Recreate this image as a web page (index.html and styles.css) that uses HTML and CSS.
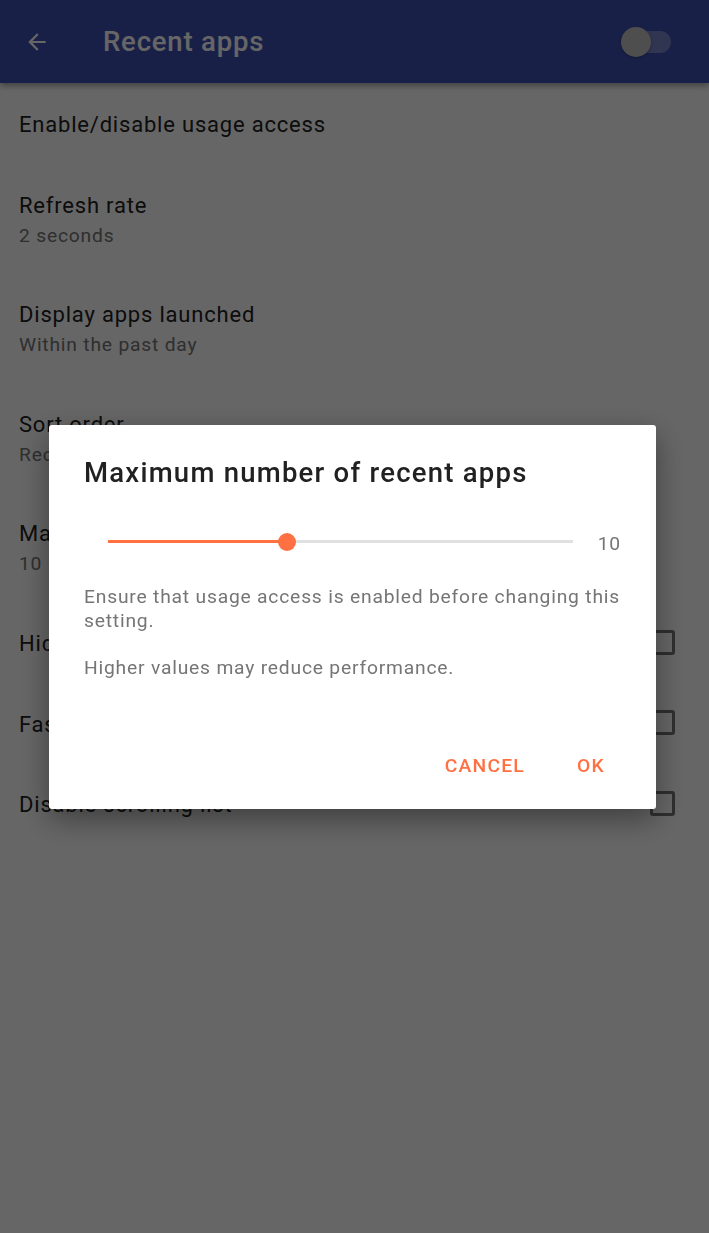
FILE: index.html
```html
<!DOCTYPE html>
<html>
<head>
<meta charset="utf-8">
<link rel="stylesheet" href="styles.css">
</head>
<body>
<header class="appbar">
  <svg class="back" width="26" height="26" viewBox="0 0 24 24"><path d="M20 11H7.83l5.59-5.59L12 4l-8 8 8 8 1.41-1.41L7.83 13H20v-2z" fill="#fff"/></svg>
  <div class="title">Recent apps</div>
  <div class="switch"><div class="track"></div><div class="thumb"></div></div>
</header>
<main class="list">
  <div class="item single first"><div class="t">Enable/disable usage access</div></div>
  <div class="item two"><div class="t">Refresh rate</div><div class="s">2 seconds</div></div>
  <div class="item two"><div class="t">Display apps launched</div><div class="s">Within the past day</div></div>
  <div class="item two"><div class="t">Sort order</div><div class="s">Recently used first</div></div>
  <div class="item two"><div class="t">Maximum number of recent apps</div><div class="s">10</div></div>
  <div class="item check"><div class="t">Hide apps from the list</div><div class="box"></div></div>
  <div class="item check"><div class="t">Fast scrolling</div><div class="box"></div></div>
  <div class="item check"><div class="t">Disable scrolling list</div><div class="box"></div></div>
</main>
<div class="scrim">
  <div class="dialog">
    <div class="dtitle">Maximum number of recent apps</div>
    <div class="slider-row">
      <div class="slider">
        <div class="active" style="width:179px"></div>
        <div class="knob"></div>
        <div class="rest"></div>
      </div>
      <div class="value">10</div>
    </div>
    <p class="msg first-msg">Ensure that usage access is enabled before changing this setting.</p>
    <p class="msg">Higher values may reduce performance.</p>
    <div class="actions">
      <button class="btn">CANCEL</button>
      <button class="btn ok">OK</button>
    </div>
  </div>
</div>
</body>
</html>
```
FILE: styles.css
```css
html, body {
  margin: 0;
  padding: 0;
  background: #ffffff;
  font-family: Roboto, "Noto Sans", sans-serif;
  letter-spacing: 0.05em;
  height: 1233px;
  overflow: hidden;
}
.appbar {
  height: 83px;
  background: #3f51b5;
  display: flex;
  align-items: center;
  padding-left: 24px;
  padding-right: 38px;
  box-shadow: 0 3px 6px rgba(0,0,0,0.35);
  position: relative;
  z-index: 1;
}
.back { display: block; flex: none; }
.title {
  color: #ffffff;
  font-size: 27.5px;
  font-weight: 500;
  margin-left: 53px;
  flex: 1;
}
.switch {
  position: relative;
  width: 50px;
  height: 30px;
}
.track {
  position: absolute;
  left: 2px;
  right: 0;
  top: 4px;
  height: 22px;
  border-radius: 11px;
  background: rgba(255,255,255,0.3);
}
.thumb {
  position: absolute;
  left: 0;
  top: 0;
  width: 30px;
  height: 30px;
  border-radius: 50%;
  background: #c4c4c4;
  box-shadow: 0 1px 3px rgba(0,0,0,0.3);
}
.list { display: flex; flex-direction: column; }
.item {
  padding-left: 19px;
  display: flex;
  flex-direction: column;
  justify-content: center;
}
.item .t {
  font-size: 22px;
  line-height: 30px;
  color: #212121;
}
.item .s {
  font-size: 19.25px;
  line-height: 30px;
  color: #757575;
}
.first { height: 83px; }
.two { height: 109.5px; }
.check {
  height: 80.5px;
  flex-direction: row;
  align-items: center;
  justify-content: space-between;
  padding-right: 34px;
}
.box {
  width: 19px;
  height: 19px;
  border: 3px solid #757575;
  border-radius: 3px;
  margin-top: -4px;
}
.scrim {
  position: fixed;
  inset: 0;
  background: rgba(0,0,0,0.6);
  display: flex;
  align-items: center;
  justify-content: center;
  z-index: 5;
}
.dialog {
  width: 607px;
  height: 384px;
  box-sizing: border-box;
  margin-right: 4px;
  background: #ffffff;
  border-radius: 3px;
  box-shadow: 0 10px 30px rgba(0,0,0,0.4);
  padding: 32px 0 20px 0;
  display: flex;
  flex-direction: column;
}
.dtitle {
  padding: 0 35px;
  font-size: 27.5px;
  line-height: 32px;
  font-weight: 500;
  color: #212121;
  letter-spacing: 0.045em;
}
.slider-row {
  margin-top: 33px;
  height: 40px;
  display: flex;
  align-items: center;
  padding: 0 35px 0 59px;
}
.slider {
  width: 465px;
  display: flex;
  align-items: center;
  height: 40px;
}
.active {
  height: 3px;
  background: #ff7043;
}
.knob {
  width: 18px;
  height: 18px;
  border-radius: 50%;
  background: #ff7043;
  margin: 0 -9px;
  position: relative;
  z-index: 1;
}
.rest {
  flex: 1;
  height: 3px;
  background: #e0e0e0;
}
.value {
  margin-left: auto;
  font-size: 19.25px;
  color: #757575;
  padding-top: 4px;
}
.msg {
  margin: 23px 0 0 0;
  padding: 0 35px;
  font-size: 19.25px;
  line-height: 24px;
  color: #757575;
}
.actions {
  margin-top: auto;
  display: flex;
  justify-content: flex-end;
  gap: 11px;
  padding-right: 21px;
}
.btn {
  border: none;
  background: transparent;
  height: 48px;
  min-width: 88px;
  padding: 0 11px;
  font-family: Roboto, "Noto Sans", sans-serif;
  font-size: 19.25px;
  font-weight: 500;
  color: #ff7043;
  letter-spacing: 0.065em;
  padding-top: 1px;
}
```
